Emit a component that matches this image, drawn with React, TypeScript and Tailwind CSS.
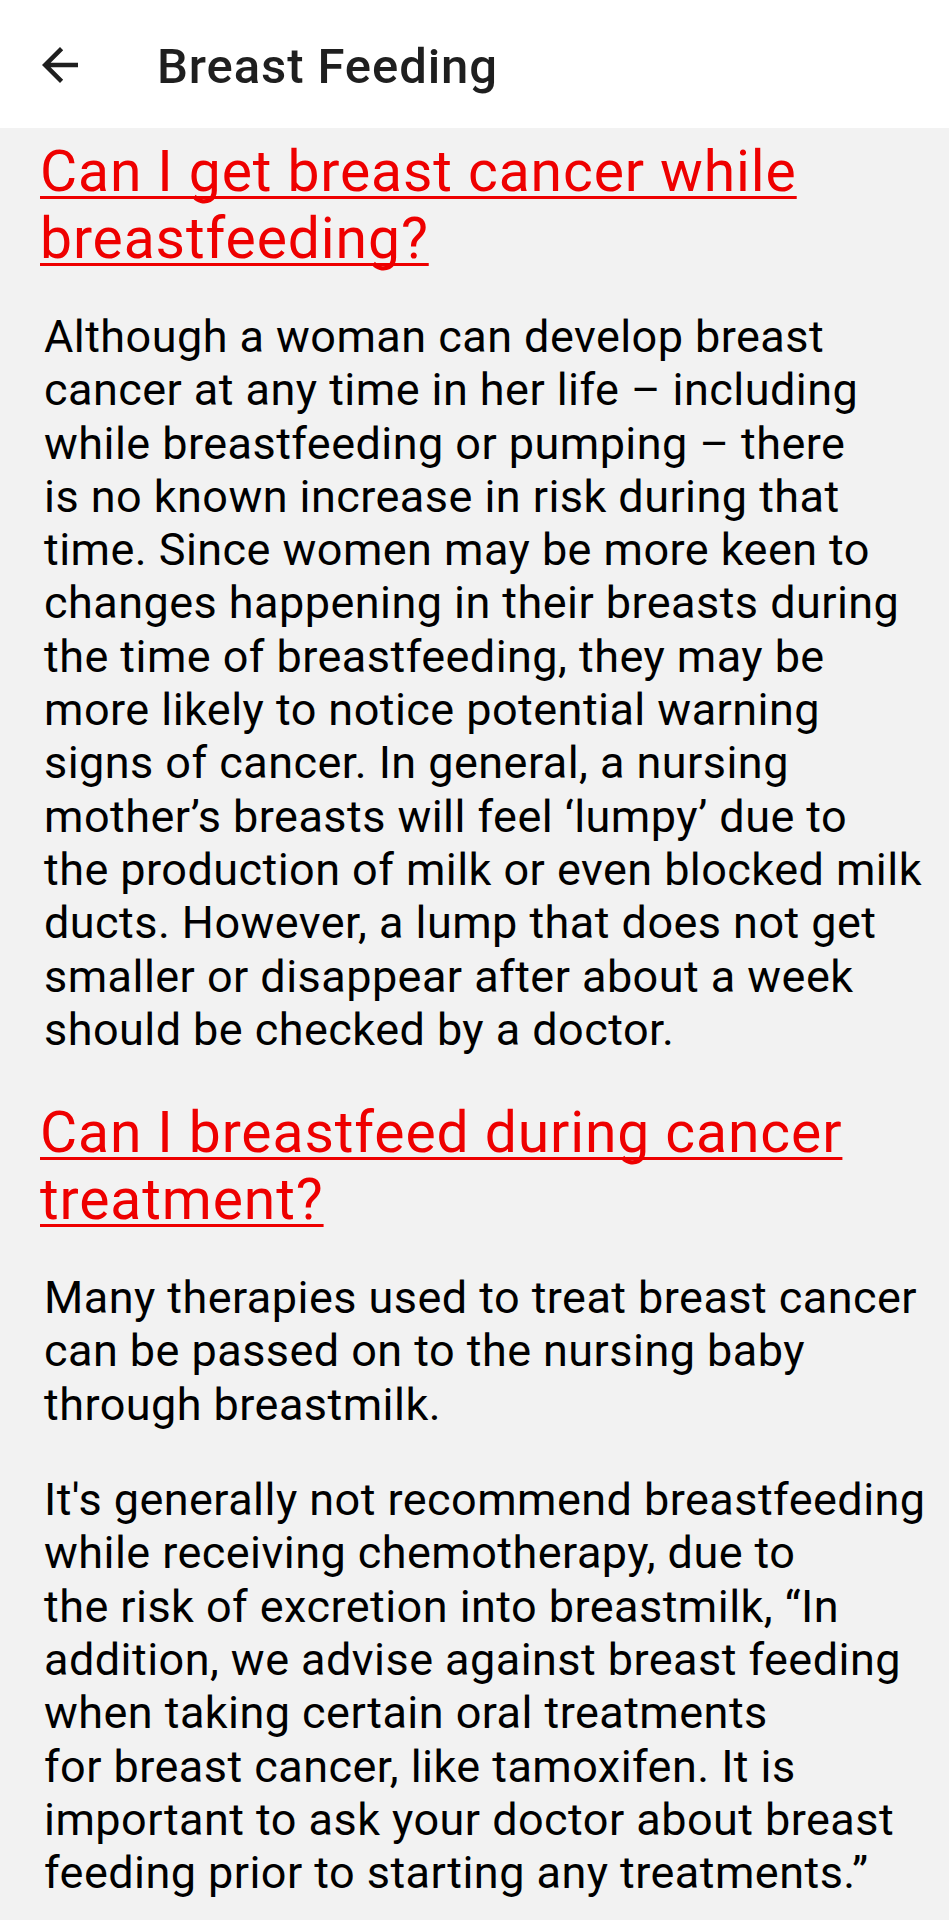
import React from 'react';

type Block =
  | { kind: 'heading'; lines: string[] }
  | { kind: 'para'; lines: string[] };

const blocks: Block[] = [
  { kind: 'heading', lines: ['Can I get breast cancer while', 'breastfeeding?'] },
  {
    kind: 'para',
    lines: [
      'Although a woman can develop breast',
      'cancer at any time in her life – including',
      'while breastfeeding or pumping – there',
      'is no known increase in risk during that',
      'time. Since women may be more keen to',
      'changes happening in their breasts during',
      'the time of breastfeeding, they may be',
      'more likely to notice potential warning',
      'signs of cancer. In general, a nursing',
      'mother’s breasts will feel ‘lumpy’ due to',
      'the production of milk or even blocked milk',
      'ducts. However, a lump that does not get',
      'smaller or disappear after about a week',
      'should be checked by a doctor.',
    ],
  },
  { kind: 'heading', lines: ['Can I breastfeed during cancer', 'treatment?'] },
  {
    kind: 'para',
    lines: [
      'Many therapies used to treat breast cancer',
      'can be passed on to the nursing baby',
      'through breastmilk.',
    ],
  },
  {
    kind: 'para',
    lines: [
      "It's generally not recommend breastfeeding",
      'while receiving chemotherapy, due to',
      'the risk of excretion into breastmilk, “In',
      'addition, we advise against breast feeding',
      'when taking certain oral treatments',
      'for breast cancer, like tamoxifen. It is',
      'important to ask your doctor about breast',
      'feeding prior to starting any treatments.”',
    ],
  },
];

const App = () => {
  return (
    <div className="w-[949px] min-h-[1920px] bg-[#f2f2f2] font-['Roboto',_'Liberation_Sans',_sans-serif]">
      {/* toolbar */}
      <header className="flex items-center h-[128px] pt-[6px] bg-white">
        <svg viewBox="0 0 24 24" className="w-[54px] h-[54px] ml-[33px] -mt-[5px] fill-[#1f1f1f]">
          <path d="M20 11H7.83l5.59-5.59L12 4l-8 8 8 8 1.41-1.41L7.83 13H20v-2z" />
        </svg>
        <h1 className="ml-[70px] text-[49px] leading-[58px] font-medium tracking-[0.9px] text-[#1f1f1f]">
          Breast Feeding
        </h1>
      </header>

      {/* article */}
      <main className="pt-[10px] pb-[20px]">
        {blocks.map((b, i) => {
          const prev = blocks[i - 1];
          if (b.kind === 'heading') {
            return (
              <h2
                key={i}
                className={`pl-[40px] text-[57px] leading-[67px] tracking-[0.9px] text-[#ee0000] underline decoration-[3px] underline-offset-[5px] [text-decoration-skip-ink:none] ${
                  i === 0 ? '' : 'mt-[43px]'
                }`}
              >
                {b.lines.map((l, j) => (
                  <span key={j} className="block whitespace-nowrap w-fit">
                    {l}
                  </span>
                ))}
              </h2>
            );
          }
          return (
            <p
              key={i}
              className={`pl-[44px] text-[45px] leading-[53.3px] tracking-[0.45px] text-black ${
                prev && prev.kind === 'heading' ? 'mt-[38px]' : 'mt-[42px]'
              }`}
            >
              {b.lines.map((l, j) => (
                <span key={j} className="block whitespace-nowrap">
                  {l}
                </span>
              ))}
            </p>
          );
        })}
      </main>
    </div>
  );
};

export default App;
